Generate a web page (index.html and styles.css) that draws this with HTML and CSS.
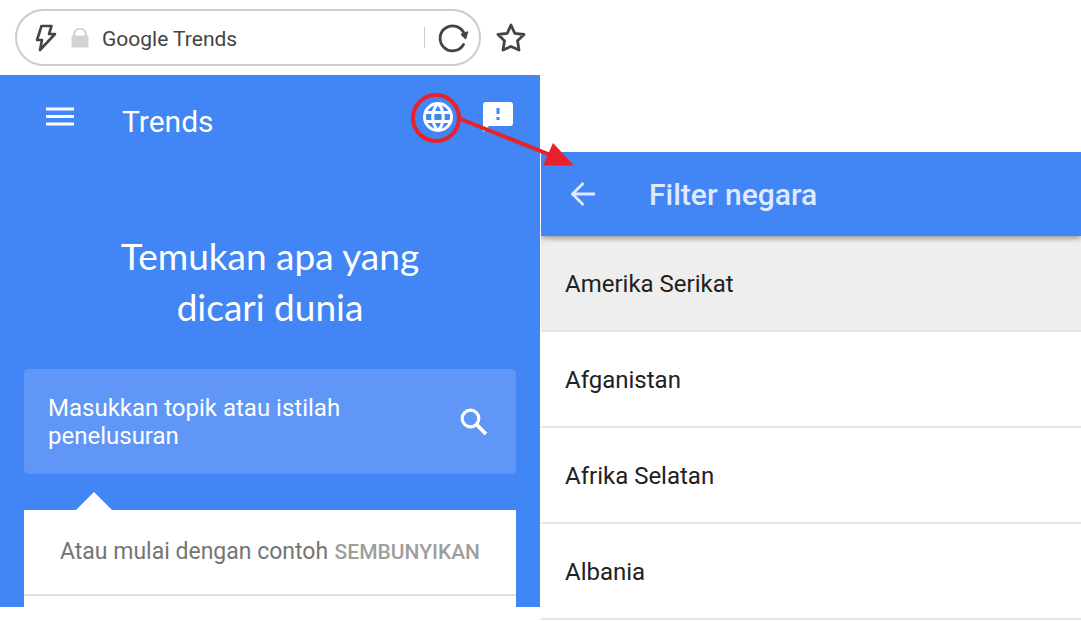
FILE: index.html
```html
<!DOCTYPE html>
<html lang="id">
<head>
<meta charset="utf-8">
<meta name="viewport" content="width=device-width, initial-scale=1">
<title>Google Trends</title>
<link rel="stylesheet" href="styles.css">
</head>
<body>
<main class="screens">
  <section class="phone">
    <div class="browser-bar">
      <div class="address">
        <svg class="bolt" width="24" height="30" viewBox="0 0 24 30" aria-hidden="true"><path d="M8.500 3H18.500L16 11H22L7 27L9 17H4Z" fill="none" stroke="#444" stroke-width="2.600" stroke-linejoin="round"/></svg>
        <svg class="lock" width="18" height="20" viewBox="0 0 18 20" aria-hidden="true"><path d="M3 9V6.500a6 5.700 0 0 1 12 0V9" fill="none" stroke="#d2d2d2" stroke-width="2"/><rect x="0.500" y="7.500" width="17" height="12" rx="1" fill="#d2d2d2"/></svg>
        <span class="page-name">Google Trends</span>
        <button class="icon-button reload" type="button" aria-label="Muat ulang">
          <svg width="32" height="32" viewBox="0 0 32 32"><path d="M26.500 22.500A12.500 12.500 0 1 1 27.500 12.500" fill="none" stroke="#444" stroke-width="2.800" stroke-linecap="round"/><path d="M24.500 12.500L30.500 10L28.500 16.500Z" fill="#444" stroke="#444" stroke-width="1.500" stroke-linejoin="round"/></svg>
        </button>
      </div>
      <button class="icon-button" type="button" aria-label="Tandai halaman">
        <svg width="32" height="32" viewBox="0 0 32 32"><path d="M16 3L19.800 11.300L29 12.500L22.500 18.800L24 28L16 24.500L8 28L9.500 18.800L3 12.500L12.200 11.300Z" fill="none" stroke="#444" stroke-width="2.800" stroke-linejoin="round"/></svg>
      </button>
    </div>
    <div class="trends">
      <header class="toolbar">
        <button class="icon-button" type="button" aria-label="Menu">
          <svg width="28" height="20" viewBox="0 0 28 20"><path d="M0 2H28M0 9.500H28M0 17H28" stroke="#fff" stroke-width="3"/></svg>
        </button>
        <h1 class="toolbar-title">Trends</h1>
        <button class="icon-button" type="button" aria-label="Filter negara">
          <svg width="30" height="30" viewBox="0 0 30 30"><g fill="none" stroke="#fff" stroke-width="3"><circle cx="15" cy="15" r="13.500"/><path d="M2.500 10.500H27.500M2.500 19.500H27.500M15 1.500C8 8.500 8 21.500 15 28.500M15 1.500C22 8.500 22 21.500 15 28.500"/></g></svg>
        </button>
        <button class="icon-button" type="button" aria-label="Kirim masukan">
          <svg width="30" height="30" viewBox="0 0 30 30"><path d="M3 0H27A3 3 0 0 1 30 3V21A3 3 0 0 1 27 24H6L0 30V3A3 3 0 0 1 3 0Z" fill="#fff"/><path d="M13.500 6H16.500V12H13.500ZM13.500 15H16.500V18H13.500Z" fill="#4285f4"/></svg>
        </button>
      </header>
      <h2 class="headline">Temukan apa yang<br>dicari dunia</h2>
      <form class="search">
        <textarea class="search-field" rows="2" aria-label="Istilah penelusuran" placeholder="Masukkan topik atau istilah penelusuran"></textarea>
        <button class="icon-button" type="button" aria-label="Telusuri">
          <svg width="28" height="28" viewBox="0 0 28 28"><g fill="none" stroke="#fff" stroke-width="3.200"><circle cx="10.500" cy="10.500" r="8.300"/><path d="M16.500 16.500L26 26" stroke-width="3.800"/></g></svg>
        </button>
      </form>
      <svg class="pointer" width="36" height="18" viewBox="0 0 36 18" aria-hidden="true"><path d="M0 18L18 0L36 18Z" fill="#fff"/></svg>
      <section class="examples">
        <div class="examples-head">
          <p class="examples-label">Atau mulai dengan contoh</p>
          <button class="hide-button" type="button">SEMBUNYIKAN</button>
        </div>
      </section>
    </div>
  </section>
  <section class="filter">
    <header class="filter-bar">
      <button class="icon-button" type="button" aria-label="Kembali">
        <svg width="24" height="24" viewBox="0 0 24 24"><path d="M24 12H2M12.500 1L1.500 12L12.500 23" fill="none" stroke="#dfeafd" stroke-width="2.800"/></svg>
      </button>
      <h2 class="filter-title">Filter negara</h2>
    </header>
    <ul class="countries">
      <li><button class="country selected" type="button">Amerika Serikat</button></li>
      <li><button class="country" type="button">Afganistan</button></li>
      <li><button class="country" type="button">Afrika Selatan</button></li>
      <li><button class="country" type="button">Albania</button></li>
    </ul>
  </section>
  <svg class="callout" width="168" height="80" viewBox="0 0 168 80" aria-hidden="true"><circle cx="27" cy="27" r="23" fill="none" stroke="#e8212b" stroke-width="4"/><path d="M49 27L144 65" stroke="#e8212b" stroke-width="4"/><path d="M144 52L165 74.500H134Z" fill="#e8212b"/></svg>
</main>
</body>
</html>
```
FILE: styles.css
```css
* {
  box-sizing: border-box;
}

body {
  margin: 0;
  background: #fff;
  font-family: Roboto, "Liberation Sans", sans-serif;
}

h1, h2, p, ul {
  margin: 0;
  padding: 0;
}

svg {
  display: block;
  flex: none;
}

button {
  border: 0;
  background: none;
  font-family: inherit;
  cursor: pointer;
}

.icon-button {
  flex: none;
  padding: 0;
}

.screens {
  position: relative;
  display: grid;
  grid-template-columns: 1fr 1fr;
  align-items: start;
  gap: 1px;
}

.browser-bar {
  display: flex;
  align-items: center;
  gap: 14px;
  padding: 9px 13px 9px 15px;
}

.address {
  flex: 1;
  display: flex;
  align-items: center;
  height: 57px;
  padding: 0 10px 0 16px;
  border: 2px solid #ccc;
  border-radius: 29px;
}

.lock {
  margin-left: 14px;
}

.page-name {
  flex: 1;
  margin-left: 13px;
  padding-top: 2px;
  color: #444;
  font-size: 21px;
  line-height: 28px;
}

.reload {
  display: flex;
  align-items: center;
  gap: 12px;
}

.reload::before {
  content: "";
  width: 1px;
  height: 21px;
  background: #ccc;
}

.trends {
  padding: 24px 24px 0;
  background: #4285f4;
}

.toolbar {
  display: flex;
  align-items: center;
  gap: 30px;
  height: 36px;
  padding: 0 3px 0 22px;
}

.toolbar-title {
  flex: 1;
  padding: 10px 0 0 18px;
  color: #fff;
  font-size: 30px;
  font-weight: 400;
  line-height: 36px;
}

.headline {
  padding: 95px 0 37px;
  color: #fff;
  font-family: Lato, Roboto, sans-serif;
  font-size: 37px;
  font-weight: 400;
  line-height: 51px;
  text-align: center;
}

.search {
  display: flex;
  align-items: center;
  padding: 24px 28px 24px 24px;
  border-radius: 5px;
  background: #6097f6;
}

.search-field {
  flex: 1;
  min-width: 0;
  height: 57px;
  margin-right: 80px;
  padding: 1px 0 0;
  border: 0;
  outline: 0;
  background: none;
  color: #fff;
  font-family: inherit;
  font-size: 24px;
  line-height: 28px;
  resize: none;
}

.search-field::placeholder {
  color: #fff;
  opacity: 1;
}

.pointer {
  margin: 18px 0 0 52px;
}

.examples {
  padding-bottom: 11px;
  background: #fff;
}

.examples-head {
  display: flex;
  align-items: center;
  justify-content: space-between;
  height: 86px;
  padding: 0 36px;
  border-bottom: 2px solid #e0e0e0;
  white-space: nowrap;
}

.examples-label {
  color: #757575;
  font-size: 23px;
  line-height: 28px;
}

.hide-button {
  padding: 0;
  color: #9e9e9e;
  font-size: 21px;
  font-weight: 500;
  line-height: 28px;
}

.filter {
  padding-top: 152px;
}

.filter-bar {
  position: relative;
  display: flex;
  align-items: center;
  gap: 54px;
  height: 84px;
  padding: 0 30px;
  background: #4285f4;
  box-shadow: 0 2px 6px rgba(0, 0, 0, 0.4);
  clip-path: inset(0 0 -10px 0);
}

.filter-title {
  padding-top: 2px;
  color: #dfeafd;
  font-size: 30px;
  font-weight: 500;
  line-height: 36px;
}

.countries {
  list-style: none;
}

.country {
  display: block;
  width: 100%;
  height: 96px;
  padding: 2px 24px 0;
  border-bottom: 2px solid #e4e4e4;
  color: #212121;
  font-size: 24px;
  line-height: 28px;
  text-align: left;
}

.selected {
  background: #eee;
}

.callout {
  position: absolute;
  top: 91px;
  left: calc(50% - 132px);
}
```
